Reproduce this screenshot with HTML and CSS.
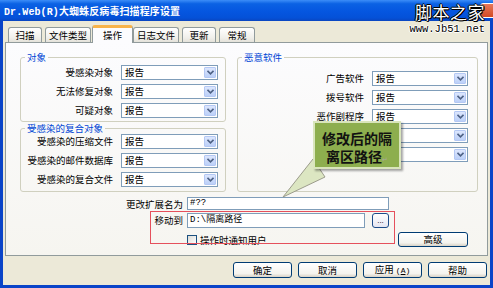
FILE: index.html
```html
<!DOCTYPE html>
<html lang="zh-CN">
<head>
    <meta charset="UTF-8">
    <meta name="viewport" content="width=device-width, initial-scale=1.0">
    <title>Dr.Web(R)大蜘蛛反病毒扫描程序设置</title>
    <link rel="stylesheet" href="styles.css">
</head>
<body>
<div class="window">
    <div class="titlebar">
        <span class="title">Dr.Web(R)大蜘蛛反病毒扫描程序设置</span>
        <span class="close-btn"></span>
    </div>

    <div class="client">
        <div class="tabs">
            <div class="tab">扫描</div>
            <div class="tab">文件类型</div>
            <div class="tab active">操作</div>
            <div class="tab">日志文件</div>
            <div class="tab">更新</div>
            <div class="tab">常规</div>
        </div>

        <div class="panel">
            <div class="groups">
                <div class="col-left">
                    <fieldset class="group group-objects">
                        <legend>对象</legend>
                        <div class="row"><label>受感染对象</label><div class="select"><span>报告</span><i class="arrow"><svg width="7" height="5" viewBox="0 0 7 5"><polyline points="0.5,0.8 3.5,3.8 6.5,0.8" fill="none" stroke="#4D6185" stroke-width="1.6"/></svg></i></div></div>
                        <div class="row"><label>无法修复对象</label><div class="select"><span>报告</span><i class="arrow"><svg width="7" height="5" viewBox="0 0 7 5"><polyline points="0.5,0.8 3.5,3.8 6.5,0.8" fill="none" stroke="#4D6185" stroke-width="1.6"/></svg></i></div></div>
                        <div class="row"><label>可疑对象</label><div class="select"><span>报告</span><i class="arrow"><svg width="7" height="5" viewBox="0 0 7 5"><polyline points="0.5,0.8 3.5,3.8 6.5,0.8" fill="none" stroke="#4D6185" stroke-width="1.6"/></svg></i></div></div>
                    </fieldset>
                    <fieldset class="group group-complex">
                        <legend>受感染的复合对象</legend>
                        <div class="row"><label>受感染的压缩文件</label><div class="select"><span>报告</span><i class="arrow"><svg width="7" height="5" viewBox="0 0 7 5"><polyline points="0.5,0.8 3.5,3.8 6.5,0.8" fill="none" stroke="#4D6185" stroke-width="1.6"/></svg></i></div></div>
                        <div class="row"><label>受感染的邮件数据库</label><div class="select"><span>报告</span><i class="arrow"><svg width="7" height="5" viewBox="0 0 7 5"><polyline points="0.5,0.8 3.5,3.8 6.5,0.8" fill="none" stroke="#4D6185" stroke-width="1.6"/></svg></i></div></div>
                        <div class="row"><label>受感染的复合文件</label><div class="select"><span>报告</span><i class="arrow"><svg width="7" height="5" viewBox="0 0 7 5"><polyline points="0.5,0.8 3.5,3.8 6.5,0.8" fill="none" stroke="#4D6185" stroke-width="1.6"/></svg></i></div></div>
                    </fieldset>
                </div>

                <fieldset class="group group-malware">
                    <legend>恶意软件</legend>
                    <div class="row"><label>广告软件</label><div class="select"><span>报告</span><i class="arrow"><svg width="7" height="5" viewBox="0 0 7 5"><polyline points="0.5,0.8 3.5,3.8 6.5,0.8" fill="none" stroke="#4D6185" stroke-width="1.6"/></svg></i></div></div>
                    <div class="row"><label>拨号软件</label><div class="select"><span>报告</span><i class="arrow"><svg width="7" height="5" viewBox="0 0 7 5"><polyline points="0.5,0.8 3.5,3.8 6.5,0.8" fill="none" stroke="#4D6185" stroke-width="1.6"/></svg></i></div></div>
                    <div class="row"><label>恶作剧程序</label><div class="select"><span>报告</span><i class="arrow"><svg width="7" height="5" viewBox="0 0 7 5"><polyline points="0.5,0.8 3.5,3.8 6.5,0.8" fill="none" stroke="#4D6185" stroke-width="1.6"/></svg></i></div></div>
                    <div class="row"><label>风险程序</label><div class="select"><span>报告</span><i class="arrow"><svg width="7" height="5" viewBox="0 0 7 5"><polyline points="0.5,0.8 3.5,3.8 6.5,0.8" fill="none" stroke="#4D6185" stroke-width="1.6"/></svg></i></div></div>
                    <div class="row"><label>黑客工具</label><div class="select"><span>报告</span><i class="arrow"><svg width="7" height="5" viewBox="0 0 7 5"><polyline points="0.5,0.8 3.5,3.8 6.5,0.8" fill="none" stroke="#4D6185" stroke-width="1.6"/></svg></i></div></div>
                </fieldset>
            </div>

            <div class="options">
                <label class="opt-label">更改扩展名为</label>
                <div class="input mono">#??</div>
                <div></div>

                <label class="opt-label">移动到</label>
                <div class="path-field">
                    <div class="input mono">D:\隔离路径</div>
                    <button class="browse">...</button>
                </div>
                <div></div>

                <div></div>
                <div class="check"><span class="box"></span>操作时通知用户</div>
                <button class="btn btn-adv">高级</button>
            </div>
        </div>

        <div class="buttons">
            <button class="btn">确定</button>
            <button class="btn">取消</button>
            <button class="btn">应用 <span class="mono">(<u>A</u>)</span></button>
            <button class="btn">帮助</button>
        </div>
    </div>

    <!-- annotations laid over the dialog -->
    <div class="highlight"></div>
    <svg class="callout-tail" width="60" height="60" viewBox="0 0 60 60">
        <polygon points="33,20 45,38 3,58" fill="#DCE6C2" stroke="#9C9C8C" stroke-width="1"/>
    </svg>
    <div class="callout">修改后的隔<br>离区路径<span class="ret">↵</span></div>

    <div class="watermark">
        <div class="wm-cn">脚本之家</div>
        <div class="wm-url">www.Jb51.net</div>
    </div>
</div>
</body>
</html>
```

FILE: styles.css
```css
* {
    box-sizing: border-box;
}
body {
    margin: 0;
    font-family: "Noto Sans CJK SC", sans-serif;
    font-size: 9.5px;
    color: #000;
    background: #fff;
}
.mono {
    font-family: "Liberation Mono", "Noto Sans CJK SC", monospace;
}
.window {
    position: relative;
    width: 493px;
    height: 288px;
    overflow: hidden;
    display: flex;
    flex-direction: column;
}
.titlebar {
    height: 21px;
    background: linear-gradient(to bottom, #3C8DF8 0%, #0B62E4 18%, #0556E0 55%, #0451D8 85%, #0A46C0 100%);
    display: flex;
    align-items: center;
    padding-left: 4px;
}
.title {
    color: #fff;
    font-family: "Liberation Mono", "Noto Sans CJK SC", monospace;
    font-weight: bold;
    font-size: 10px;
    letter-spacing: 0.1px;
}
.close-btn {
    position: absolute;
    top: 3px;
    right: -8px;
    width: 21px;
    height: 15px;
    border: 1px solid #fff;
    border-radius: 3px;
    background: linear-gradient(#E8785A, #D24A24);
}
.client {
    flex: 1;
    background: #ECE9D8;
    border: 3px solid #0A44C8;
    border-top: 0;
    padding: 0 2px 6px 2px;
}
.tabs {
    height: 21px;
    display: flex;
    align-items: flex-end;
    padding-left: 3px;
}
.tab {
    min-width: 34px;
    height: 15px;
    line-height: 14px;
    padding: 0 3px;
    margin-right: 3px;
    text-align: center;
    border: 1px solid #919B9C;
    border-bottom: 0;
    border-radius: 3px 3px 0 0;
    background: linear-gradient(#FFFFFF, #F0EFEA 70%, #E4E2DA);
}
.tab:last-child {
    min-width: 36px;
}
.tab.active {
    position: relative;
    z-index: 1;
    min-width: 41px;
    height: 18px;
    line-height: 15px;
    margin: 0 0 -1px -2px;
    border-top: 3px solid #F7B34A;
    background: #FCFCFE;
}
.tab.active + .tab {
    margin-left: 0;
}
.panel {
    border: 1px solid #919B9C;
    background: linear-gradient(#FCFCFE, #F6F5F0);
    padding: 8px 9px 8px 14px;
}
.groups {
    display: grid;
    grid-template-columns: 206px 241px;
    column-gap: 11px;
}
.col-left {
    display: flex;
    flex-direction: column;
}
.group {
    margin: 0;
    min-width: 0;
    border: 1px solid #D0D0BF;
    border-radius: 3px;
    padding: 2px 7px 3px 0;
}
.group legend {
    margin-left: 4px;
    padding: 0 2px;
    line-height: 12px;
    color: #0046D5;
}
.group-complex {
    padding-top: 0;
    padding-bottom: 4px;
}
.group-malware {
    padding: 8px 9px 3px 0;
}
.row {
    display: grid;
    grid-template-columns: 1fr 97px;
    column-gap: 8px;
    height: 15px;
    margin-bottom: 4px;
}
.group-malware .row {
    grid-template-columns: 1fr 96px;
}
.row:last-child {
    margin-bottom: 0;
}
.row label {
    text-align: right;
    line-height: 15px;
    white-space: nowrap;
}
.select {
    display: flex;
    align-items: center;
    height: 15px;
    border: 1px solid #7F9DB9;
    background: #fff;
    padding: 0 1px 0 3px;
}
.select span {
    flex: 1;
    line-height: 13px;
}
.arrow {
    width: 12px;
    height: 11px;
    border: 1px solid #B4C8F4;
    border-radius: 1px;
    background: linear-gradient(#DCE6FD, #BCD0F8);
    display: flex;
    align-items: center;
    justify-content: center;
}
.arrow svg {
    display: block;
}
.options {
    display: grid;
    grid-template-columns: 163px 202px 75px;
    grid-template-rows: 13px 16px 15px;
    column-gap: 4px;
    row-gap: 3px;
    margin-top: 5px;
}
.opt-label {
    text-align: right;
    line-height: 14px;
    white-space: nowrap;
}
.input {
    height: 100%;
    border: 1px solid #7F9DB9;
    background: #fff;
    padding: 0 2px;
    line-height: 11px;
    font-size: 9px;
}
.path-field {
    display: flex;
    gap: 7px;
}
.path-field .input {
    width: 178px;
    height: 15px;
    line-height: 13px;
}
.browse {
    width: 17px;
    height: 15px;
    padding: 0;
    border: 1px solid #1D4B89;
    border-radius: 3px;
    background: linear-gradient(#FFFFFF, #E6E6F2);
    font-size: 8px;
    line-height: 14px;
    color: #000;
}
.check {
    display: flex;
    align-items: center;
    margin-top: 1px;
}
.check .box {
    width: 10px;
    height: 10px;
    border: 1px solid #1C5180;
    background: linear-gradient(135deg, #DCDCD7, #FFFFFF);
    margin-right: 3px;
}
.btn {
    height: 16px;
    padding: 0;
    border: 1px solid #003C74;
    border-radius: 3px;
    background: linear-gradient(#FFFFFF, #F4F3EE 75%, #D8D2C6);
    font-family: "Noto Sans CJK SC", sans-serif;
    font-size: 9.5px;
    line-height: 13px;
    color: #000;
}
.btn-adv {
    height: 15px;
    margin-left: 5px;
}
.buttons {
    display: flex;
    justify-content: flex-end;
    gap: 6px;
    margin-top: 6px;
    padding-right: 1px;
}
.buttons .btn {
    width: 59px;
}
.buttons .mono {
    font-size: 8px;
}
.highlight {
    position: absolute;
    left: 150px;
    top: 211px;
    width: 245px;
    height: 33px;
    border: 1px solid #E5505C;
}
.callout-tail {
    position: absolute;
    left: 280px;
    top: 139px;
}
.callout {
    position: absolute;
    left: 313px;
    top: 121px;
    width: 88px;
    height: 48px;
    padding-top: 6px;
    background: #8DAE4E;
    border: 2px solid #D9E5BC;
    box-shadow: 2px 2px 2px rgba(0, 0, 0, 0.35);
    text-align: center;
    font-size: 14px;
    font-weight: bold;
    line-height: 18px;
    color: #111;
}
.ret {
    font-size: 7px;
    font-weight: normal;
    color: #A8A8A0;
}
.watermark {
    position: absolute;
    top: 2px;
    right: 8px;
    text-align: right;
}
.wm-cn {
    font-size: 17px;
    line-height: 20px;
    color: #fff;
    letter-spacing: 0.5px;
    text-shadow: 1px 0 0 #000, -1px 0 0 #000, 0 1px 0 #000, 0 -1px 0 #000, 1px 1px 0 #000;
}
.wm-url {
    margin-top: 2px;
    font-family: "Liberation Mono", monospace;
    font-size: 10.5px;
    line-height: 11px;
    color: #000;
    text-shadow: 1px 0 0 #fff, -1px 0 0 #fff, 0 1px 0 #fff, 0 -1px 0 #fff;
}
```
